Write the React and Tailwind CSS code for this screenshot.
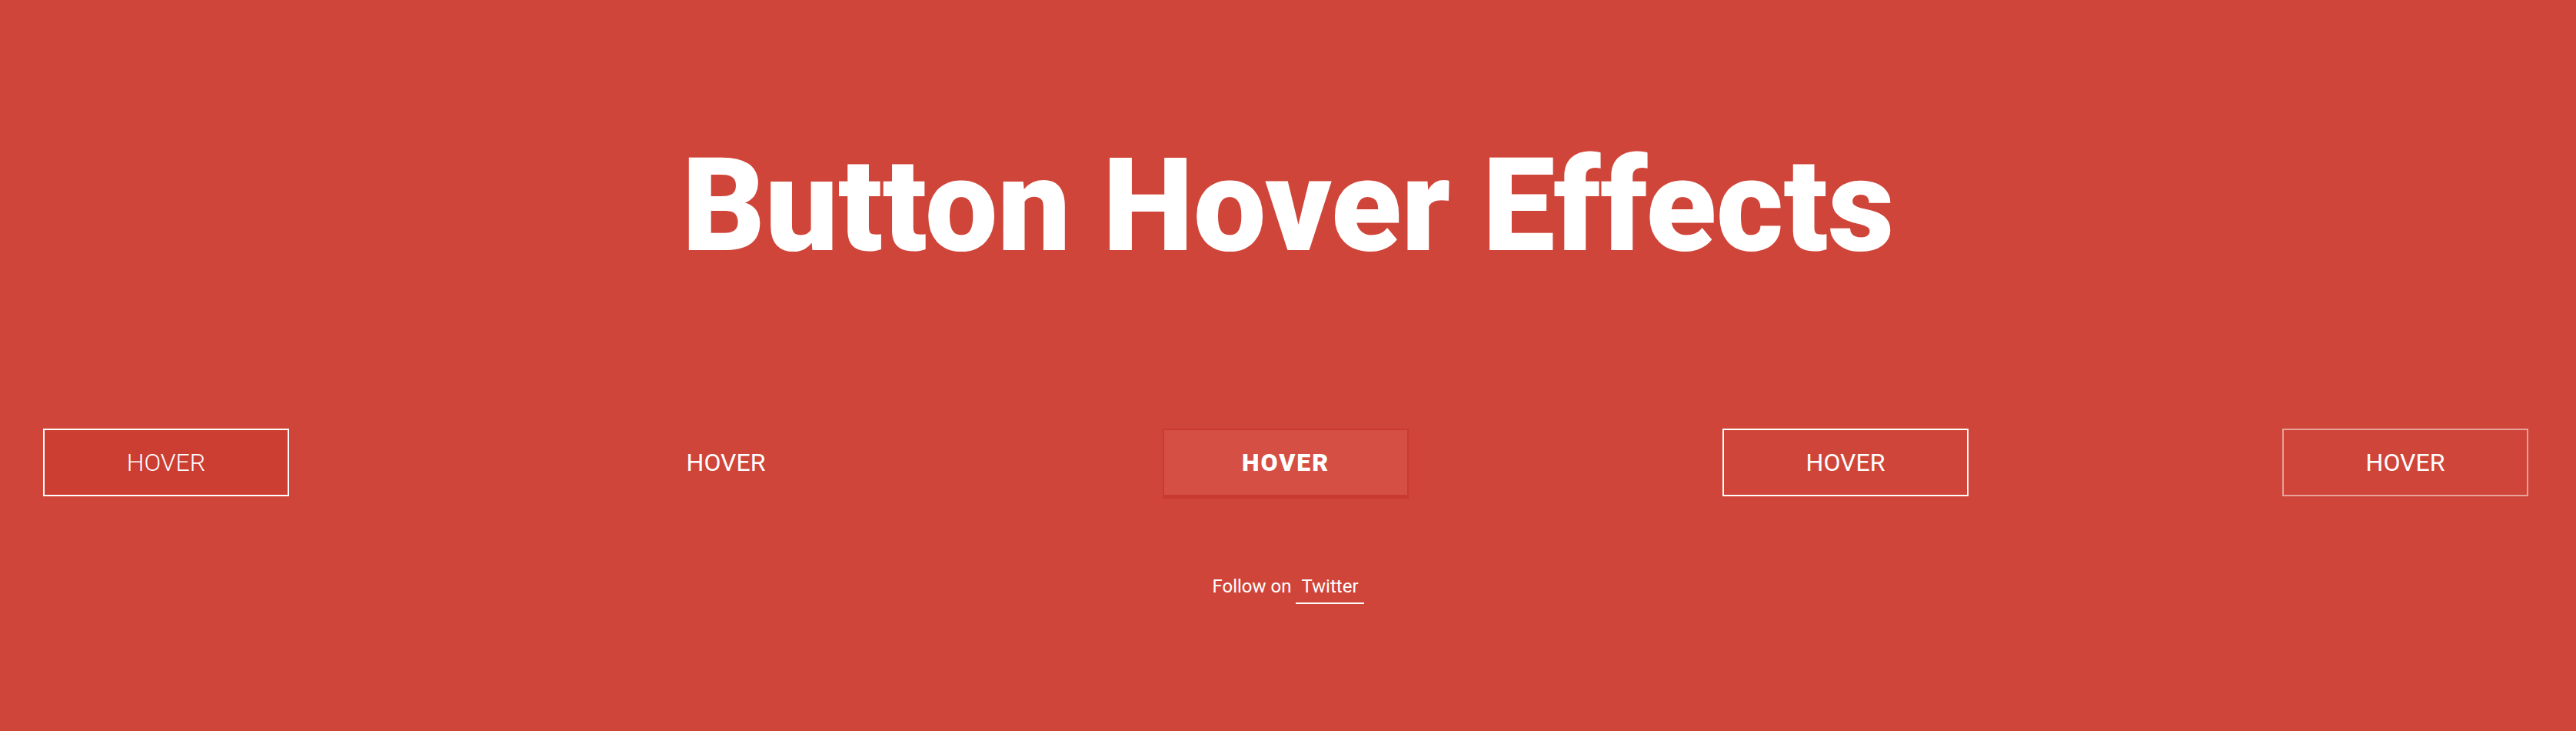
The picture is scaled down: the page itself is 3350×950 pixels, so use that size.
const buttons = [
  {
    key: 'thin',
    className: 'border-2 border-white bg-[#cc3d32] font-light',
  },
  {
    key: 'plain',
    className: 'border-2 border-transparent font-normal',
  },
  {
    key: 'raised',
    className:
      'border-2 border-[#c93b31] bg-[#d54f45] font-black tracking-[2px] shadow-[0_3px_0_#c73a30]',
  },
  {
    key: 'outline',
    className: 'border-2 border-white font-normal',
  },
  {
    key: 'soft',
    className: 'border-2 border-white/50 font-normal',
  },
];

export default function App() {
  return (
    <div className="min-h-[950px] w-full bg-[#d04539] font-['Roboto','Liberation_Sans',sans-serif] text-white">
      <div className="pt-[184px]">
        <h1 className="text-center text-[168px] font-black leading-none">
          Button Hover Effects
        </h1>
      </div>

      <div className="mt-[205px] flex gap-[408px] pl-[56px]">
        {buttons.map((b) => (
          <button
            key={b.key}
            className={`flex h-[88px] w-[320px] shrink-0 items-center justify-center text-[32px] leading-none ${b.className}`}
          >
            HOVER
          </button>
        ))}
      </div>

      <div className="mt-[105px] text-center text-[24px] leading-none">
        Follow on{' '}
        <a className="inline-block border-b-2 border-white px-[7px] pb-[9px]">
          Twitter
        </a>
      </div>
    </div>
  );
}
